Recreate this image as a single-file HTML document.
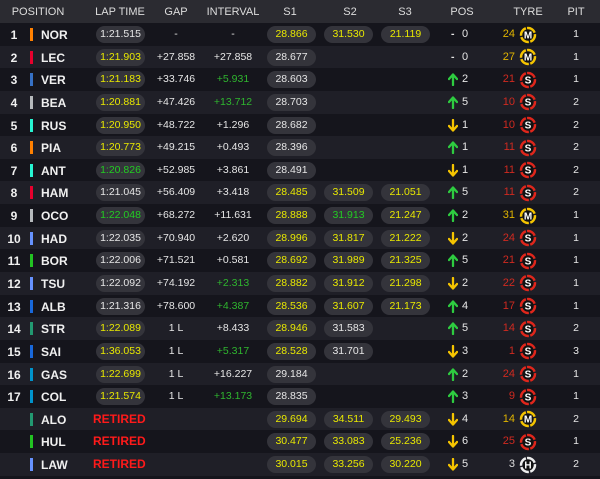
<!DOCTYPE html>
<html><head><meta charset="utf-8"><style>
*{margin:0;padding:0;box-sizing:border-box}
body{width:600px;height:479px;background:#15151c;font-family:"Liberation Sans","DejaVu Sans",sans-serif;color:#e6e6e6;overflow:hidden;position:relative}
.hd{position:absolute;left:0;top:0;width:600px;height:23px;background:#2b2b31;font-size:11px;color:#ddd}
.hd span{position:absolute;top:6px;transform:translateX(-50%)}
.r{position:absolute;left:0;width:600px;height:23px;font-size:10.5px}
.o{background:#15151c}.e{background:#1f1f27}
.r>*{position:absolute}
.n{left:2px;width:24px;text-align:center;top:5px;font-weight:bold;font-size:12px;color:#f0f0f0}
.b{left:30px;top:5px;width:3px;height:13px}
.c{left:41px;top:5px;font-weight:bold;font-size:12px;color:#f0f0f0}
.p{height:17px;top:3px;border-radius:9px;background:#34343b;text-align:center;line-height:17px;width:49px;font-size:10.5px}
.lt{left:96px}.s1{left:267px}.s2{left:324px}.s3{left:381px}
.g{left:146px;width:60px;text-align:center;top:5px}
.i{left:203px;width:60px;text-align:center;top:5px}
.y{color:#e8e800}.gr{color:#22cc22}.gi{color:#2fb52f}.w{color:#e6e6e6}
.ar{left:448px;top:5px}
.dash{left:451px;top:5px;font-weight:bold}
.pn{left:462px;top:5px;font-size:11px}
.tn{left:480px;width:35px;text-align:right;top:5px;font-size:11px}
.ty{left:519px;top:2.5px}
.pt{left:566px;width:20px;text-align:center;top:5px}
.ret{left:93px;top:4px;font-weight:bold;font-size:12px;color:#ff1a1a}
</style></head><body>
<div class="hd"><span style="left:38px">POSITION</span><span style="left:120px">LAP TIME</span><span style="left:176px">GAP</span><span style="left:233px">INTERVAL</span><span style="left:290px">S1</span><span style="left:350px">S2</span><span style="left:405px">S3</span><span style="left:462px">POS</span><span style="left:528px">TYRE</span><span style="left:576px">PIT</span></div>

<svg width="0" height="0" style="position:absolute"><defs>
<g id="tM"><circle cx="9" cy="9" r="7" fill="none" stroke="#f5c400" stroke-width="2.4" stroke-dasharray="9.5 1.5" transform="rotate(-98 9 9)"/><circle cx="9" cy="9" r="5.4" fill="#111"/><text x="9" y="12.6" font-size="10" font-weight="bold" text-anchor="middle" fill="#fff" font-family="Liberation Sans">M</text></g>
<g id="tS"><circle cx="9" cy="9" r="7" fill="none" stroke="#e0261b" stroke-width="2.4" stroke-dasharray="9.5 1.5" transform="rotate(-98 9 9)"/><circle cx="9" cy="9" r="5.4" fill="#111"/><text x="9" y="12.6" font-size="10" font-weight="bold" text-anchor="middle" fill="#fff" font-family="Liberation Sans">S</text></g>
<g id="tH"><circle cx="9" cy="9" r="7" fill="none" stroke="#eee" stroke-width="2.4" stroke-dasharray="9.5 1.5" transform="rotate(-98 9 9)"/><circle cx="9" cy="9" r="5.4" fill="#111"/><text x="9" y="12.6" font-size="10" font-weight="bold" text-anchor="middle" fill="#fff" font-family="Liberation Sans">H</text></g>
<g id="up"><path d="M5 12V2M1 6L5 1.5L9 6" fill="none" stroke="#2ecc40" stroke-width="2.3" stroke-linecap="round" stroke-linejoin="round"/></g>
<g id="dn"><path d="M5 1V11M1 7L5 11.5L9 7" fill="none" stroke="#f5c400" stroke-width="2.3" stroke-linecap="round" stroke-linejoin="round"/></g>
</defs></svg>

<div class="r o" style="top:23px"><span class="n">1</span><span class="b" style="background:#ff8000"></span><span class="c">NOR</span><span class="p lt w">1:21.515</span><span class="g">-</span><span class="i">-</span><span class="p s1 y">28.866</span><span class="p s2 y">31.530</span><span class="p s3 y">21.119</span><span class="dash">-</span><span class="pn">0</span><span class="tn" style="color:#e0b400">24</span><svg class="ty" width="18" height="18"><use href="#tM"/></svg><span class="pt">1</span></div>
<div class="r e" style="top:45.6px"><span class="n">2</span><span class="b" style="background:#e8002d"></span><span class="c">LEC</span><span class="p lt y">1:21.903</span><span class="g">+27.858</span><span class="i">+27.858</span><span class="p s1 w">28.677</span><span class="dash">-</span><span class="pn">0</span><span class="tn" style="color:#e0b400">27</span><svg class="ty" width="18" height="18"><use href="#tM"/></svg><span class="pt">1</span></div>
<div class="r o" style="top:68.3px"><span class="n">3</span><span class="b" style="background:#3671c6"></span><span class="c">VER</span><span class="p lt y">1:21.183</span><span class="g">+33.746</span><span class="i gi">+5.931</span><span class="p s1 w">28.603</span><svg class="ar" width="10" height="13"><use href="#up"/></svg><span class="pn">2</span><span class="tn" style="color:#d02a20">21</span><svg class="ty" width="18" height="18"><use href="#tS"/></svg><span class="pt">1</span></div>
<div class="r e" style="top:90.9px"><span class="n">4</span><span class="b" style="background:#b6babd"></span><span class="c">BEA</span><span class="p lt y">1:20.881</span><span class="g">+47.426</span><span class="i gi">+13.712</span><span class="p s1 w">28.703</span><svg class="ar" width="10" height="13"><use href="#up"/></svg><span class="pn">5</span><span class="tn" style="color:#d02a20">10</span><svg class="ty" width="18" height="18"><use href="#tS"/></svg><span class="pt">2</span></div>
<div class="r o" style="top:113.5px"><span class="n">5</span><span class="b" style="background:#27f4d2"></span><span class="c">RUS</span><span class="p lt y">1:20.950</span><span class="g">+48.722</span><span class="i">+1.296</span><span class="p s1 w">28.682</span><svg class="ar" width="10" height="13"><use href="#dn"/></svg><span class="pn">1</span><span class="tn" style="color:#d02a20">10</span><svg class="ty" width="18" height="18"><use href="#tS"/></svg><span class="pt">2</span></div>
<div class="r e" style="top:136.2px"><span class="n">6</span><span class="b" style="background:#ff8000"></span><span class="c">PIA</span><span class="p lt y">1:20.773</span><span class="g">+49.215</span><span class="i">+0.493</span><span class="p s1 w">28.396</span><svg class="ar" width="10" height="13"><use href="#up"/></svg><span class="pn">1</span><span class="tn" style="color:#d02a20">11</span><svg class="ty" width="18" height="18"><use href="#tS"/></svg><span class="pt">2</span></div>
<div class="r o" style="top:158.8px"><span class="n">7</span><span class="b" style="background:#27f4d2"></span><span class="c">ANT</span><span class="p lt gr">1:20.826</span><span class="g">+52.985</span><span class="i">+3.861</span><span class="p s1 w">28.491</span><svg class="ar" width="10" height="13"><use href="#dn"/></svg><span class="pn">1</span><span class="tn" style="color:#d02a20">11</span><svg class="ty" width="18" height="18"><use href="#tS"/></svg><span class="pt">2</span></div>
<div class="r e" style="top:181.4px"><span class="n">8</span><span class="b" style="background:#e8002d"></span><span class="c">HAM</span><span class="p lt w">1:21.045</span><span class="g">+56.409</span><span class="i">+3.418</span><span class="p s1 y">28.485</span><span class="p s2 y">31.509</span><span class="p s3 y">21.051</span><svg class="ar" width="10" height="13"><use href="#up"/></svg><span class="pn">5</span><span class="tn" style="color:#d02a20">11</span><svg class="ty" width="18" height="18"><use href="#tS"/></svg><span class="pt">2</span></div>
<div class="r o" style="top:204px"><span class="n">9</span><span class="b" style="background:#b6babd"></span><span class="c">OCO</span><span class="p lt gr">1:22.048</span><span class="g">+68.272</span><span class="i">+11.631</span><span class="p s1 y">28.888</span><span class="p s2 gr">31.913</span><span class="p s3 y">21.247</span><svg class="ar" width="10" height="13"><use href="#up"/></svg><span class="pn">2</span><span class="tn" style="color:#e0b400">31</span><svg class="ty" width="18" height="18"><use href="#tM"/></svg><span class="pt">1</span></div>
<div class="r e" style="top:226.7px"><span class="n">10</span><span class="b" style="background:#6692ff"></span><span class="c">HAD</span><span class="p lt w">1:22.035</span><span class="g">+70.940</span><span class="i">+2.620</span><span class="p s1 y">28.996</span><span class="p s2 y">31.817</span><span class="p s3 y">21.222</span><svg class="ar" width="10" height="13"><use href="#dn"/></svg><span class="pn">2</span><span class="tn" style="color:#d02a20">24</span><svg class="ty" width="18" height="18"><use href="#tS"/></svg><span class="pt">1</span></div>
<div class="r o" style="top:249.3px"><span class="n">11</span><span class="b" style="background:#22c222"></span><span class="c">BOR</span><span class="p lt w">1:22.006</span><span class="g">+71.521</span><span class="i">+0.581</span><span class="p s1 y">28.692</span><span class="p s2 y">31.989</span><span class="p s3 y">21.325</span><svg class="ar" width="10" height="13"><use href="#up"/></svg><span class="pn">5</span><span class="tn" style="color:#d02a20">21</span><svg class="ty" width="18" height="18"><use href="#tS"/></svg><span class="pt">1</span></div>
<div class="r e" style="top:271.9px"><span class="n">12</span><span class="b" style="background:#6692ff"></span><span class="c">TSU</span><span class="p lt w">1:22.092</span><span class="g">+74.192</span><span class="i gi">+2.313</span><span class="p s1 y">28.882</span><span class="p s2 y">31.912</span><span class="p s3 y">21.298</span><svg class="ar" width="10" height="13"><use href="#dn"/></svg><span class="pn">2</span><span class="tn" style="color:#d02a20">22</span><svg class="ty" width="18" height="18"><use href="#tS"/></svg><span class="pt">1</span></div>
<div class="r o" style="top:294.6px"><span class="n">13</span><span class="b" style="background:#1868db"></span><span class="c">ALB</span><span class="p lt w">1:21.316</span><span class="g">+78.600</span><span class="i gi">+4.387</span><span class="p s1 y">28.536</span><span class="p s2 y">31.607</span><span class="p s3 y">21.173</span><svg class="ar" width="10" height="13"><use href="#up"/></svg><span class="pn">4</span><span class="tn" style="color:#d02a20">17</span><svg class="ty" width="18" height="18"><use href="#tS"/></svg><span class="pt">1</span></div>
<div class="r e" style="top:317.2px"><span class="n">14</span><span class="b" style="background:#229971"></span><span class="c">STR</span><span class="p lt y">1:22.089</span><span class="g">1 L</span><span class="i">+8.433</span><span class="p s1 y">28.946</span><span class="p s2 w">31.583</span><svg class="ar" width="10" height="13"><use href="#up"/></svg><span class="pn">5</span><span class="tn" style="color:#d02a20">14</span><svg class="ty" width="18" height="18"><use href="#tS"/></svg><span class="pt">2</span></div>
<div class="r o" style="top:339.8px"><span class="n">15</span><span class="b" style="background:#1868db"></span><span class="c">SAI</span><span class="p lt y">1:36.053</span><span class="g">1 L</span><span class="i gi">+5.317</span><span class="p s1 y">28.528</span><span class="p s2 w">31.701</span><svg class="ar" width="10" height="13"><use href="#dn"/></svg><span class="pn">3</span><span class="tn" style="color:#d02a20">1</span><svg class="ty" width="18" height="18"><use href="#tS"/></svg><span class="pt">3</span></div>
<div class="r e" style="top:362.5px"><span class="n">16</span><span class="b" style="background:#0093cc"></span><span class="c">GAS</span><span class="p lt y">1:22.699</span><span class="g">1 L</span><span class="i">+16.227</span><span class="p s1 w">29.184</span><svg class="ar" width="10" height="13"><use href="#up"/></svg><span class="pn">2</span><span class="tn" style="color:#d02a20">24</span><svg class="ty" width="18" height="18"><use href="#tS"/></svg><span class="pt">1</span></div>
<div class="r o" style="top:385.1px"><span class="n">17</span><span class="b" style="background:#0093cc"></span><span class="c">COL</span><span class="p lt y">1:21.574</span><span class="g">1 L</span><span class="i gi">+13.173</span><span class="p s1 w">28.835</span><svg class="ar" width="10" height="13"><use href="#up"/></svg><span class="pn">3</span><span class="tn" style="color:#d02a20">9</span><svg class="ty" width="18" height="18"><use href="#tS"/></svg><span class="pt">1</span></div>
<div class="r e" style="top:407.7px"><span class="b" style="background:#229971"></span><span class="c">ALO</span><span class="ret">RETIRED</span><span class="p s1 y">29.694</span><span class="p s2 y">34.511</span><span class="p s3 y">29.493</span><svg class="ar" width="10" height="13"><use href="#dn"/></svg><span class="pn">4</span><span class="tn" style="color:#e0b400">14</span><svg class="ty" width="18" height="18"><use href="#tM"/></svg><span class="pt">2</span></div>
<div class="r o" style="top:430.4px"><span class="b" style="background:#22c222"></span><span class="c">HUL</span><span class="ret">RETIRED</span><span class="p s1 y">30.477</span><span class="p s2 y">33.083</span><span class="p s3 y">25.236</span><svg class="ar" width="10" height="13"><use href="#dn"/></svg><span class="pn">6</span><span class="tn" style="color:#d02a20">25</span><svg class="ty" width="18" height="18"><use href="#tS"/></svg><span class="pt">1</span></div>
<div class="r e" style="top:453px"><span class="b" style="background:#6692ff"></span><span class="c">LAW</span><span class="ret">RETIRED</span><span class="p s1 y">30.015</span><span class="p s2 y">33.256</span><span class="p s3 y">30.220</span><svg class="ar" width="10" height="13"><use href="#dn"/></svg><span class="pn">5</span><span class="tn" style="color:#ddd">3</span><svg class="ty" width="18" height="18"><use href="#tH"/></svg><span class="pt">2</span></div>
</body></html>
